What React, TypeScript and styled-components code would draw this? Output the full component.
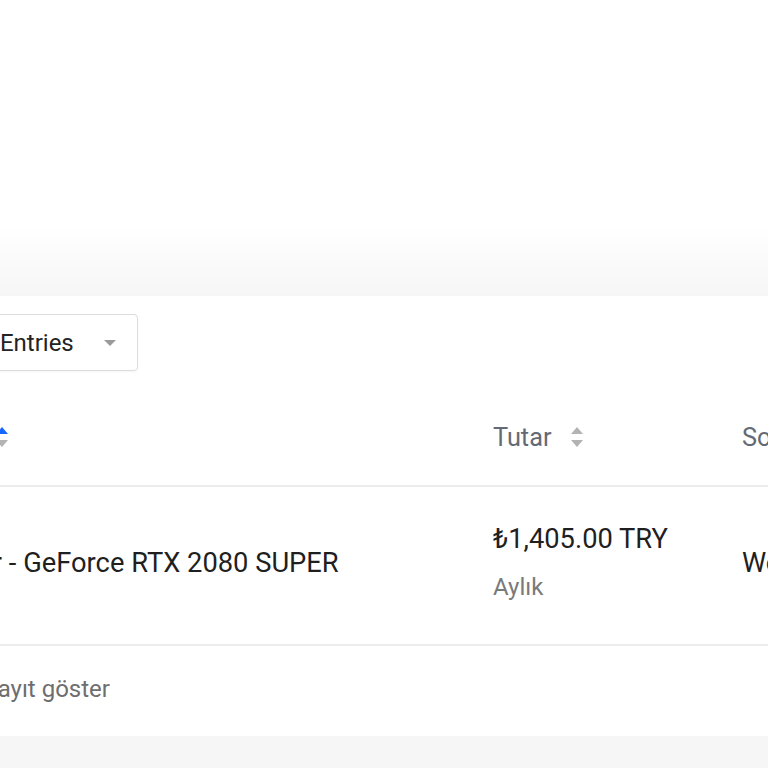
import styled, { createGlobalStyle } from "styled-components";

const GlobalStyle = createGlobalStyle`
  html, body {
    margin: 0;
    padding: 0;
    background: #f6f6f6;
    font-family: Roboto, "Liberation Sans", Arial, sans-serif;
  }
`;

const Page = styled.div`
  width: 768px;
  height: 768px;
  overflow: hidden;
  background: #f6f6f6;
`;

const Hero = styled.div`
  height: 296px;
  background: linear-gradient(180deg, #ffffff 0px, #ffffff 225px, #f6f6f6 296px);
`;

const Card = styled.section`
  width: 1200px;
  margin-left: -228px;
  padding-left: 24px;
  background: #fff;
`;

const Toolbar = styled.div`
  display: flex;
  padding-top: 18px;
`;

const LengthSelect = styled.div`
  display: flex;
  align-items: center;
  height: 55px;
  padding: 0 21px 0 14px;
  margin-left: 156px;
  border: 1px solid #dcdcdc;
  border-radius: 4px;
  box-shadow: 0 1px 2px rgba(0, 0, 0, 0.04);
  font-size: 24px;
  color: #232323;
`;

const Caret = styled.span`
  width: 0;
  height: 0;
  margin-left: 30px;
  border-left: 6.5px solid transparent;
  border-right: 6.5px solid transparent;
  border-top: 6px solid #9a9a9a;
`;

const Row = styled.div<{ $height: number; $shift?: number }>`
  display: grid;
  grid-template-columns: 697px 249px 1fr;
  align-items: center;
  box-sizing: border-box;
  height: ${(p) => p.$height}px;
  margin-left: -24px;
  padding-left: 24px;
  padding-top: ${(p) => (p.$shift && p.$shift > 0 ? p.$shift : 0)}px;
  padding-bottom: ${(p) => (p.$shift && p.$shift < 0 ? -p.$shift : 0)}px;
  border-bottom: 2px solid #ececec;
`;

const HeadCell = styled.div<{ $gap?: number }>`
  display: flex;
  align-items: center;
  gap: ${(p) => p.$gap ?? 19}px;
  font-size: 25.3px;
  color: #646a75;
  white-space: nowrap;
`;

const Cell = styled.div`
  font-size: 27.3px;
  color: #1f1f1f;
  white-space: nowrap;
  line-height: 48px;
`;

const SubText = styled.div`
  font-size: 24px;
  color: #7a7a7a;
  line-height: 48px;
`;

const Footer = styled.div`
  display: flex;
  align-items: center;
  box-sizing: border-box;
  height: 90px;
  padding-bottom: 4px;
  font-size: 24px;
  color: #6e6e6e;
  white-space: nowrap;
`;

const Bottom = styled.div`
  height: 40px;
  background: #f6f6f6;
`;

const SortIcon = ({ active }: { active?: boolean }) => (
  <svg width="14" height="24" viewBox="0 0 14 24">
    <path d="M7 2 L13 9 L1 9 Z" fill={active ? "#1565ff" : "#b3b3b3"} />
    <path d="M7 22 L13 15 L1 15 Z" fill="#b3b3b3" />
  </svg>
);

const App = () => {
  return (
    <Page>
      <GlobalStyle />
      <Hero />
      <Card>
        <Toolbar>
          <LengthSelect>
            10 Entries
            <Caret />
          </LengthSelect>
        </Toolbar>
        <Row $height={116} $shift={18}>
          <HeadCell $gap={12}>
            Ürün/Hizmet Adı
            <SortIcon active />
          </HeadCell>
          <HeadCell>
            Tutar
            <SortIcon />
          </HeadCell>
          <HeadCell>
            Sonraki Ödeme Tarihi
            <SortIcon />
          </HeadCell>
        </Row>
        <Row $height={159} $shift={-5}>
          <Cell>Dedicated Server - GeForce RTX 2080 SUPER</Cell>
          <div>
            <Cell>₺1,405.00 TRY</Cell>
            <SubText>Aylık</SubText>
          </div>
          <Cell>Wednesday, June 12th, 2024</Cell>
        </Row>
        <Footer>Sayfa başına 100 kayıt göster</Footer>
      </Card>
      <Bottom />
    </Page>
  );
};

export default App;
